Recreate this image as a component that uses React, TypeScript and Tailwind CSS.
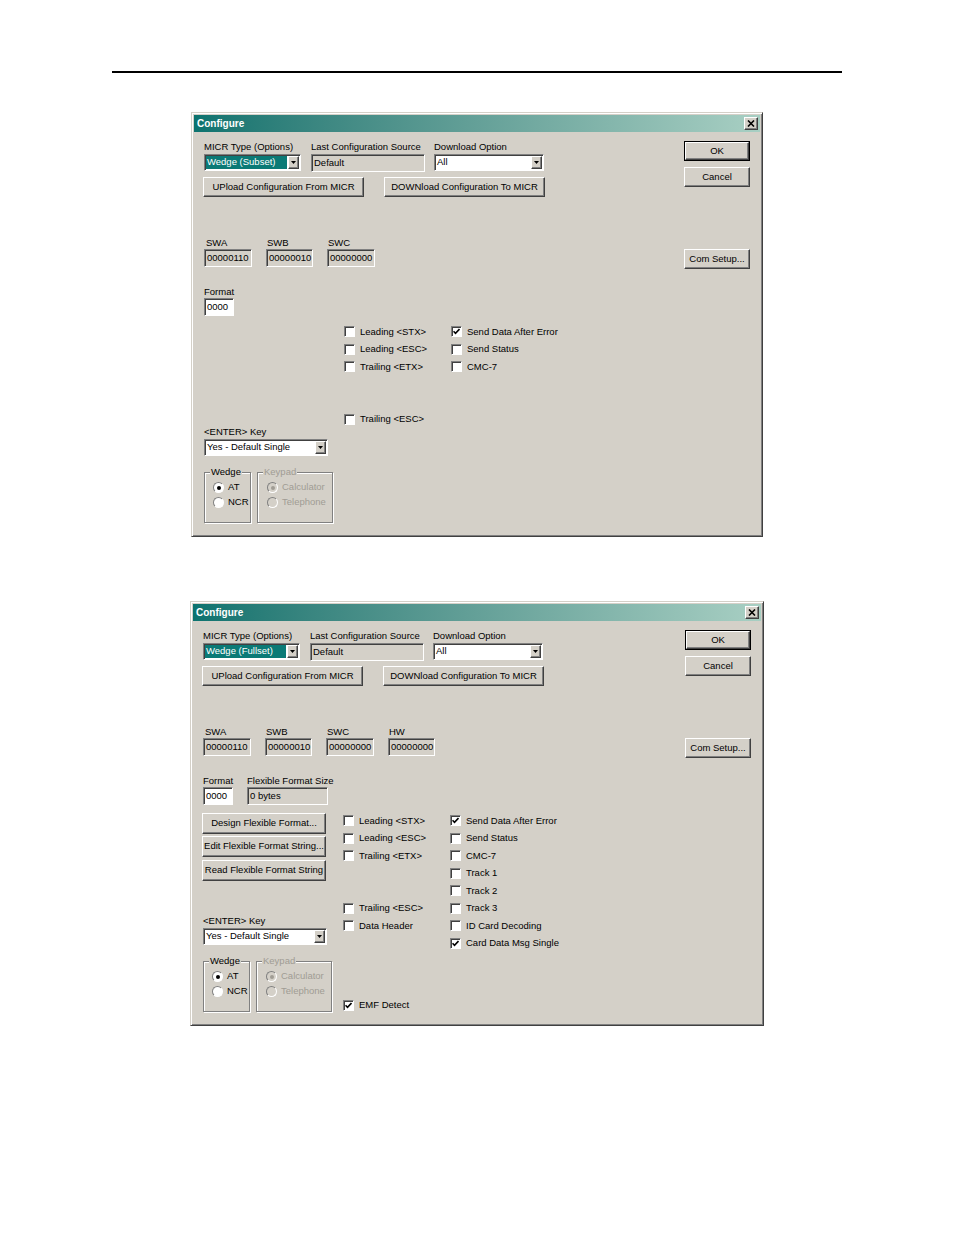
import React from "react";

const raised =
  "bg-[#d4d0c8] border border-t-white border-l-white border-r-[#404040] border-b-[#404040] shadow-[inset_-1px_-1px_0_#808080]";
const sunken =
  "border border-t-[#808080] border-l-[#808080] border-r-white border-b-white shadow-[inset_1px_1px_0_#404040]";
const disabledText = "text-[#a09c94]";

function Label({ children, className = "" }: { children: React.ReactNode; className?: string }) {
  return <div className={`h-[12px] leading-[12px] whitespace-nowrap ${className}`}>{children}</div>;
}

function Field({ value, className = "", white = false }: { value: string; className?: string; white?: boolean }) {
  return (
    <div
      className={`h-[18px] flex items-center pl-[2px] whitespace-nowrap ${sunken} ${
        white ? "bg-white" : "bg-[#d4d0c8]"
      } ${className}`}
    >
      {value}
    </div>
  );
}

function Arrow() {
  return (
    <div className={`w-[11px] flex items-center justify-center ${raised}`}>
      <svg width="5" height="3" viewBox="0 0 5 3">
        <path d="M0 0h5L2.5 3z" fill="black" />
      </svg>
    </div>
  );
}

function Combo({ value, className = "", selected = false }: { value: string; className?: string; selected?: boolean }) {
  return (
    <div className={`h-[17px] flex bg-white p-[1px] ${sunken} ${className}`}>
      <div className="flex-1 flex items-center pr-[1px]">
        <div
          className={`h-full flex-1 flex items-center pl-[1px] whitespace-nowrap ${
            selected ? "bg-[#0b7a76] text-white" : ""
          }`}
        >
          {value}
        </div>
      </div>
      <Arrow />
    </div>
  );
}

function Button({ children, className = "" }: { children: React.ReactNode; className?: string }) {
  return (
    <div className={`flex items-center justify-center whitespace-nowrap ${raised} ${className}`}>{children}</div>
  );
}

function Check({ label, checked = false }: { label: string; checked?: boolean }) {
  return (
    <div className="h-[17.5px] flex items-center whitespace-nowrap">
      <div className={`w-[11px] h-[11px] bg-white flex items-center justify-center ${sunken}`}>
        {checked && (
          <svg width="7" height="7" viewBox="0 0 7 7">
            <path d="M0.5 3.2 L2.5 5.3 L6.5 1" stroke="black" strokeWidth="1.6" fill="none" />
          </svg>
        )}
      </div>
      <span className="ml-[5px]">{label}</span>
    </div>
  );
}

function Radio({ label, checked = false, disabled = false }: { label: string; checked?: boolean; disabled?: boolean }) {
  return (
    <div className="h-[15px] flex items-center whitespace-nowrap">
      <div
        className={`w-[11px] h-[11px] rounded-full flex items-center justify-center border border-t-[#808080] border-l-[#808080] border-r-white border-b-white ${
          disabled ? "bg-[#d4d0c8]" : "bg-white"
        }`}
      >
        {checked && <div className={`w-[4px] h-[4px] rounded-full ${disabled ? "bg-[#a09c94]" : "bg-black"}`} />}
      </div>
      <span className={`ml-[4px] ${disabled ? disabledText : ""}`}>{label}</span>
    </div>
  );
}

function Group({
  title,
  disabled = false,
  className = "",
  children,
}: {
  title: string;
  disabled?: boolean;
  className?: string;
  children: React.ReactNode;
}) {
  return (
    <fieldset
      className={`h-[57px] border border-[#808080] shadow-[inset_1px_1px_0_white,1px_1px_0_white] ${className}`}
    >
      <legend className={`ml-[5px] px-[1px] h-[12px] leading-[12px] bg-[#d4d0c8] ${disabled ? disabledText : ""}`}>
        {title}
      </legend>
      <div className="pt-[2px]">{children}</div>
    </fieldset>
  );
}

function TitleBar() {
  return (
    <div className="h-[17px] flex items-center justify-between pl-[3px] pr-[2px] bg-linear-to-r from-[#0b736f] to-[#a8cfc3]">
      <span className="text-white font-bold text-[10px]">Configure</span>
      <div className={`w-[14px] h-[13px] flex items-center justify-center ${raised}`}>
        <svg width="8" height="7" viewBox="0 0 8 7">
          <path d="M1 0.5 L7 6.5 M7 0.5 L1 6.5" stroke="black" strokeWidth="1.6" />
        </svg>
      </div>
    </div>
  );
}

function Dialog({ full }: { full: boolean }) {
  return (
    <div
      className={`${
        full ? "ml-[190px] w-[574px] mt-[64px]" : "ml-[191px] w-[572px] mt-[39px]"
      } h-[425px] bg-[#d4d0c8] border border-t-[#d4d0c8] border-l-[#d4d0c8] border-r-[#404040] border-b-[#404040] shadow-[inset_1px_1px_0_white,inset_-1px_-1px_0_#808080] p-[2px] flex flex-col`}
    >
      <TitleBar />
      <div className="flex flex-1 pt-[9px] pl-[10px] pr-[10px]">
        <div className="flex-1 flex flex-col">
          <div className="flex">
            <div className="w-[97px]">
              <Label>MICR Type (Options)</Label>
              <Combo value={full ? "Wedge (Fullset)" : "Wedge (Subset)"} selected className="mt-[1px]" />
            </div>
            <div className="w-[114px] ml-[10px]">
              <Label>Last Configuration Source</Label>
              <Field value="Default" className="mt-[1px] h-[17px] items-start pt-[1px]" />
            </div>
            <div className="w-[110px] ml-[9px]">
              <Label>Download Option</Label>
              <Combo value="All" className="mt-[1px]" />
            </div>
          </div>

          <div className="flex mt-[5px]">
            <Button className="w-[161px] h-[20px] ml-[-1px]">UPload Configuration From MICR</Button>
            <Button className="w-[161px] h-[20px] ml-[20px]">DOWNload Configuration To MICR</Button>
          </div>

          <div className="flex gap-[14px] mt-[40px]">
            <div className="w-[48px]">
              <Label className="pl-[2px]">SWA</Label>
              <Field value="00000110" />
            </div>
            <div className="w-[47px]">
              <Label className="pl-[1px]">SWB</Label>
              <Field value="00000010" />
            </div>
            <div className="w-[48px]">
              <Label className="pl-[1px]">SWC</Label>
              <Field value="00000000" />
            </div>
            {full && (
              <div className="w-[47px]">
                <Label className="pl-[1px]">HW</Label>
                <Field value="00000000" />
              </div>
            )}
          </div>

          <div className="flex mt-[19px]">
            <div className="w-[30px]">
              <Label>Format</Label>
              <Field value="0000" white />
            </div>
            {full && (
              <div className="w-[81px] ml-[14px]">
                <Label>Flexible Format Size</Label>
                <Field value="0 bytes" />
              </div>
            )}
          </div>

          <div className="flex mt-[7px]">
            <div className="w-[140px] flex flex-col">
              {full && (
                <>
                  <Button className="w-[124px] h-[21px] ml-[-1px] mt-[1px]">Design Flexible Format...</Button>
                  <Button className="w-[124px] h-[21px] ml-[-1px] mt-[2px]">Edit Flexible Format String...</Button>
                  <Button className="w-[124px] h-[21px] ml-[-1px] mt-[3px]">Read Flexible Format String</Button>
                </>
              )}
              <Label className={full ? "mt-[34px]" : "mt-[103px]"}>{"<ENTER> Key"}</Label>
              <Combo value="Yes - Default Single" className="w-[124px] mt-[1px]" />
              <div className="flex mt-[10px]">
                <Group title="Wedge" className="w-[47px]">
                  <div className="pl-[8px]">
                    <Radio label="AT" checked />
                    <Radio label="NCR" />
                  </div>
                </Group>
                <Group title="Keypad" disabled className="w-[76px] ml-[6px]">
                  <div className="pl-[9px]">
                    <Radio label="Calculator" checked disabled />
                    <Radio label="Telephone" disabled />
                  </div>
                </Group>
              </div>
            </div>

            <div className="w-[107px] flex flex-col">
              <Check label={"Leading <STX>"} />
              <Check label={"Leading <ESC>"} />
              <Check label={"Trailing <ETX>"} />
              <div className="h-[35px]" />
              <Check label={"Trailing <ESC>"} />
              {full && (
                <>
                  <Check label="Data Header" />
                  <div className="mt-[61.75px]">
                    <Check label="EMF Detect" checked />
                  </div>
                </>
              )}
            </div>

            <div className="flex flex-col">
              <Check label="Send Data After Error" checked />
              <Check label="Send Status" />
              <Check label="CMC-7" />
              {full && (
                <>
                  <Check label="Track 1" />
                  <Check label="Track 2" />
                  <Check label="Track 3" />
                  <Check label="ID Card Decoding" />
                  <Check label="Card Data Msg Single" checked />
                </>
              )}
            </div>
          </div>
        </div>

        <div className="w-[66px] flex flex-col">
          <div className="h-[20px] border border-black flex">
            <Button className="flex-1">OK</Button>
          </div>
          <Button className="h-[20px] mt-[6px]">Cancel</Button>
          <Button className="h-[20px] mt-[62px]">Com Setup...</Button>
        </div>
      </div>
    </div>
  );
}

export default function App() {
  return (
    <div className="w-[954px] h-[1235px] bg-white overflow-hidden flex flex-col font-['Liberation_Sans',Arial,sans-serif] text-[9.5px] text-black">
      <div className="mt-[71px] ml-[112px] w-[730px] h-[2px] bg-black" />
      <Dialog full={false} />
      <Dialog full />
    </div>
  );
}
